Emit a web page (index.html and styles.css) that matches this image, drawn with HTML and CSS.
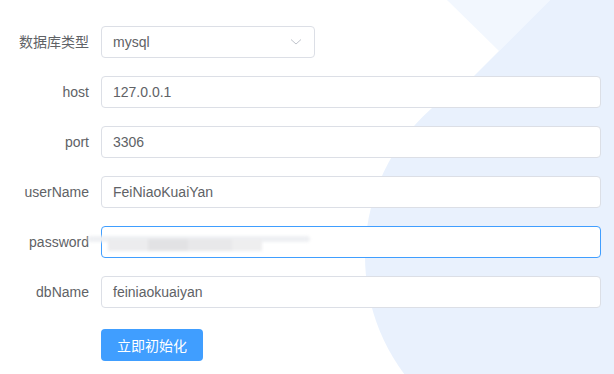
FILE: index.html
```html
<!DOCTYPE html>
<html lang="zh-CN">
<head>
    <meta charset="UTF-8">
    <meta name="viewport" content="width=device-width, initial-scale=1.0">
    <title>数据库初始化</title>
    <link rel="stylesheet" href="styles.css">
</head>
<body>
    <svg class="backdrop" width="614" height="374" viewBox="0 0 614 374">
        <rect width="614" height="374" fill="#ffffff"/>
        <polygon points="447,0 550,0 499,51" fill="#f2f7fe"/>
        <polygon points="550,0 614,0 614,140 436,114" fill="#e9f1fd"/>
        <circle cx="562" cy="256" r="197" fill="#e9f1fd"/>
    </svg>

    <form class="init-form">
        <div class="form-item">
            <label>数据库类型</label>
            <div class="select">
                <span>mysql</span>
                <svg class="arrow" width="12" height="8" viewBox="0 0 12 8">
                    <path d="M1 1.5 L6 6 L11 1.5" fill="none" stroke="#c0c4cc" stroke-width="1"/>
                </svg>
            </div>
        </div>

        <div class="form-item">
            <label>host</label>
            <div class="input">127.0.0.1</div>
        </div>

        <div class="form-item">
            <label>port</label>
            <div class="input">3306</div>
        </div>

        <div class="form-item">
            <label>userName</label>
            <div class="input">FeiNiaoKuaiYan</div>
        </div>

        <div class="form-item password-row">
            <label>password</label>
            <div class="input focused"></div>
            <div class="mosaic">
                <span class="streak"></span>
                <span class="block b1"></span>
                <span class="block b2"></span>
                <span class="block b3"></span>
                <span class="block b4"></span>
            </div>
        </div>

        <div class="form-item">
            <label>dbName</label>
            <div class="input">feiniaokuaiyan</div>
        </div>

        <div class="form-actions">
            <button type="button" class="btn-primary">立即初始化</button>
        </div>
    </form>
</body>
</html>
```

FILE: styles.css
```css
:root {
    --primary-color: #409eff;
    --text-color: #606266;
    --border-color: #dcdfe6;
}

body {
    margin: 0;
    width: 614px;
    height: 374px;
    overflow: hidden;
    position: relative;
    font-family: "Liberation Sans", "Noto Sans CJK SC", sans-serif;
    font-size: 14px;
    color: var(--text-color);
}

.backdrop {
    position: absolute;
    top: 0;
    left: 0;
    z-index: 0;
}

.init-form {
    position: relative;
    z-index: 1;
    padding-top: 26px;
    display: flex;
    flex-direction: column;
    gap: 18px;
}

.form-item {
    display: flex;
    align-items: center;
    height: 32px;
}

label {
    width: 89px;
    padding-right: 12px;
    text-align: right;
    color: var(--text-color);
    line-height: 32px;
}

.input,
.select {
    box-sizing: border-box;
    height: 32px;
    line-height: 30px;
    padding: 0 11px;
    background: #fff;
    border: 1px solid var(--border-color);
    border-radius: 4px;
    color: var(--text-color);
}

.input {
    width: 500px;
}

.input.focused {
    border-color: var(--primary-color);
}

.select {
    width: 214px;
    display: flex;
    justify-content: space-between;
    align-items: center;
}

.arrow {
    margin-right: 1px;
}

.password-row {
    position: relative;
}

.mosaic {
    position: absolute;
    left: 88px;
    top: 6px;
    width: 230px;
    height: 22px;
    filter: blur(1.5px);
    pointer-events: none;
}

.streak {
    position: absolute;
    left: 0;
    top: 4px;
    width: 222px;
    height: 6px;
    background: #eef0f3;
    border-radius: 3px;
}

.block {
    position: absolute;
    top: 7px;
    height: 12px;
    background: #e6e6e8;
}

.b1 { left: 20px; width: 40px; background: #ececee; }
.b2 { left: 60px; width: 40px; background: #e2e2e4; }
.b3 { left: 100px; width: 44px; background: #e8e8ea; }
.b4 { left: 144px; width: 30px; background: #eeeeef; }

.form-actions {
    padding-left: 101px;
    padding-top: 3px;
}

.btn-primary {
    width: 102px;
    height: 32px;
    background: var(--primary-color);
    color: #fff;
    border: none;
    border-radius: 4px;
    font-family: "Noto Sans CJK SC", sans-serif;
    font-size: 14px;
    cursor: pointer;
}
```
